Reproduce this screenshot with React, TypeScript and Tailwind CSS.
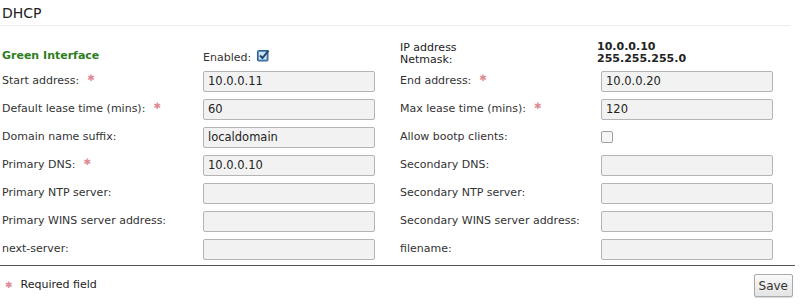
import React from "react";

const rows = [
  ["Start address:", true, "10.0.0.11", "End address:", true, "10.0.0.20"],
  ["Default lease time (mins):", true, "60", "Max lease time (mins):", true, "120"],
  ["Domain name suffix:", false, "localdomain", "Allow bootp clients:", false, null],
  ["Primary DNS:", true, "10.0.0.10", "Secondary DNS:", false, ""],
  ["Primary NTP server:", false, "", "Secondary NTP server:", false, ""],
  ["Primary WINS server address:", false, "", "Secondary WINS server address:", false, ""],
  ["next-server:", false, "", "filename:", false, ""],
] as const;

function Star() {
  return <span className="ml-[8px] text-[#e08a94] text-[9px] relative top-[-3px]">✱</span>;
}

function Field({ value }: { value: string }) {
  return (
    <input
      type="text"
      defaultValue={value}
      className="w-[172px] h-[21px] rounded-[2px] border border-[#b4b4b4] bg-[#f2f2f2] px-[4px] text-[11.5px] text-[#222] outline-none"
    />
  );
}

function Checked() {
  return (
    <svg width="13" height="13" viewBox="0 0 13 13" className="inline-block">
      <rect x="0.5" y="1.5" width="10.5" height="10.5" rx="1" fill="#5b93c9" stroke="#2e5f8f" />
      <rect x="2" y="3" width="7.5" height="7.5" fill="#cfe1f3" />
      <path d="M3 6.5 L5.5 9 L11.5 1.5" fill="none" stroke="#1f4470" strokeWidth="2" />
    </svg>
  );
}

export default function App() {
  return (
    <div className="w-[800px] h-[308px] bg-white text-[#333] text-[11px] font-['DejaVu_Sans',sans-serif]">
      <h1 className="text-[14px] leading-[20px] text-[#222] px-[2px] pt-[3px] pb-[2px] border-b border-[#ececec] mr-[10px]">
        DHCP
      </h1>

      <div className="mt-[14px] flex h-[27px]">
        <div className="w-[203px] pl-[2px] pt-[8px] font-bold text-[#2e7d1e]">Green Interface</div>
        <div className="w-[197px] pt-[10px] flex items-start gap-[6px]">
          <span>Enabled:</span>
          <span className="mt-[-3px]"><Checked /></span>
        </div>
        <div className="w-[197px] leading-[12px] pt-[2px] text-[#222]">
          <div>IP address</div>
          <div>Netmask:</div>
        </div>
        <div className="leading-[12px] pt-[1px] font-bold text-[#222]">
          <div>10.0.0.10</div>
          <div>255.255.255.0</div>
        </div>
      </div>

      <div>
        {rows.map(([l1, s1, v1, l2, s2, v2]) => (
          <div key={l1} className="flex items-center h-[28px]">
            <div className="w-[203px] pl-[2px]">
              {l1}
              {s1 && <Star />}
            </div>
            <Field value={v1} />
            <div className="w-[25px]" />
            <div className="w-[201px]">
              {l2}
              {s2 && <Star />}
            </div>
            {v2 === null ? (
              <span className="w-[12px] h-[12px] rounded-[2px] border border-[#a0a0a0] bg-[#f6f6f6]" />
            ) : (
              <Field value={v2} />
            )}
          </div>
        ))}
      </div>

      <div className="mt-[2px] mr-[5px] border-t border-[#555]" />

      <div className="flex items-center justify-between pl-[5px] pr-[7px] pt-[8px]">
        <div className="flex items-center gap-[8px]">
          <span className="text-[#e08a94] text-[9px]">✱</span>
          <span className="text-[#222]">Required field</span>
        </div>
        <button className="h-[23px] px-[4px] rounded-[2px] border border-[#aaa] bg-gradient-to-b from-[#fafafa] to-[#e4e4e4] text-[12px] text-[#333] shadow-[0_1px_1px_rgba(0,0,0,0.15)]">
          Save
        </button>
      </div>
    </div>
  );
}
